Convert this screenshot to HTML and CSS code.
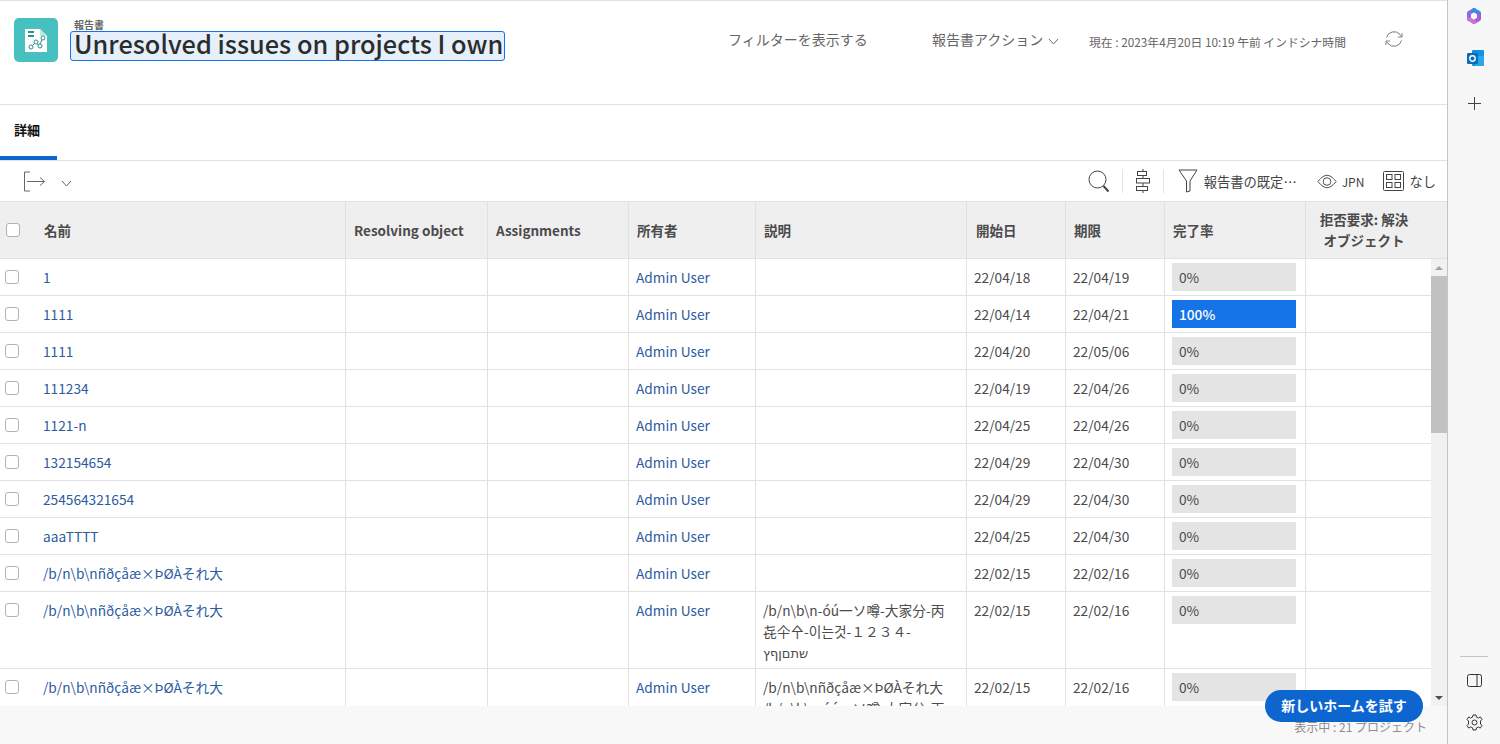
FILE: index.html

```html
<!DOCTYPE html>
<html lang="ja">
<head>
  <meta charset="UTF-8">
  <title>Unresolved issues on projects I own</title>
  <link rel="stylesheet" href="styles.css">
</head>
<body>
  <div class="app">
    <main class="main">
      <header class="top">
        <div class="logo">
          <svg width="22" height="23" viewBox="0 0 22 23">
            <path d="M0 0H15L22 7V23H0Z" fill="#fff"/>
            <path d="M15 0L22 7H15Z" fill="#bfe9e6"/>
            <path d="M3 3H9M3 7H9" stroke="#2f8f8c" stroke-width="2"/>
            <path d="M6 18L11 13L14 17L18 9" fill="none" stroke="#2f8f8c"/>
            <g fill="#fff" stroke="#2f8f8c">
              <circle cx="6" cy="18" r="2"/><circle cx="11" cy="13" r="2"/><circle cx="15" cy="17" r="2"/><circle cx="18" cy="9" r="2"/>
            </g>
          </svg>
        </div>
        <div class="heading">
          <div class="kind">報告書</div>
          <h1 class="title">Unresolved issues on projects I own</h1>
        </div>
        <div class="top-actions">
          <span class="show-filter">フィルターを表示する</span>
          <span class="report-actions">報告書アクション
            <svg class="caret" width="11" height="7" viewBox="0 0 11 7"><path d="M1 1L5.500 6L10 1" fill="none" stroke="#666"/></svg>
          </span>
          <span class="now">現在 : 2023年4月20日 10:19 午前 インドシナ時間</span>
          <svg class="refresh" width="20" height="20" viewBox="0 0 20 20" fill="none" stroke="#777">
            <path d="M2.500 8.500A7.800 7.800 0 0 1 16 5.500L17.500 7.500"/>
            <path d="M17.500 11.500A7.800 7.800 0 0 1 4 14.500L2.500 12.500"/>
            <path d="M18 4V8H14M2 16V12H6" stroke-width=".9"/>
          </svg>
        </div>
      </header>

      <nav class="tabs"><span class="tab">詳細</span></nav>

      <div class="toolbar">
        <svg class="export" width="23" height="21" viewBox="0 0 23 21" fill="none" stroke="#666">
          <path d="M7 1H1.500V20H7M4 10.500H21M17 6.500L21.500 10.500L17 14.500"/>
        </svg>
        <svg class="export-caret" width="11" height="7" viewBox="0 0 11 7"><path d="M1 1L5.500 6L10 1" fill="none" stroke="#666"/></svg>
        <div class="tools">
          <svg width="22" height="23" viewBox="0 0 22 23" fill="none" stroke="#444"><circle cx="9.500" cy="9.500" r="8.500"/><path d="M15.500 16L20.500 21.500" stroke-width="2"/></svg>
          <i class="sep"></i>
          <svg width="16" height="24" viewBox="0 0 16 24" fill="none" stroke="#444"><path d="M8 0V24"/><rect x="2.500" y="2.500" width="9" height="4" fill="#fff"/><rect x="1.500" y="9.500" width="13" height="4.500" fill="#fff"/><rect x="1.500" y="17.500" width="11" height="4" fill="#fff"/></svg>
          <i class="sep"></i>
          <span class="tool">
            <svg width="20" height="24" viewBox="0 0 20 24" fill="none" stroke="#444"><path d="M1 1H19L12 12V22L8.500 23V12Z"/></svg>
            報告書の既定…
          </span>
          <span class="tool tool-lang">
            <svg width="20" height="15" viewBox="0 0 21 15" fill="none" stroke="#444"><path d="M1 7.500C5 2.500 8 1 10.500 1S16 2.500 20 7.500C16 12.500 13 14 10.500 14S5 12.500 1 7.500Z"/><circle cx="10.500" cy="7.500" r="4"/></svg>
            JPN
          </span>
          <span class="tool tool-group">
            <svg width="21" height="20" viewBox="0 0 21 20" fill="none" stroke="#444"><rect x=".5" y=".5" width="20" height="19" rx="1"/><rect x="3.500" y="3.500" width="5.500" height="5"/><rect x="12" y="3.500" width="5.500" height="5"/><rect x="3.500" y="11.500" width="5.500" height="5"/><rect x="12" y="11.500" width="5.500" height="5"/></svg>
            なし
          </span>
        </div>
      </div>

      <table class="grid grid-head">
        <colgroup><col class="c-name"><col class="c-res"><col class="c-asg"><col class="c-own"><col class="c-desc"><col class="c-date"><col class="c-date"><col class="c-pct"><col></colgroup>
        <tr>
          <th class="name-cell"><span class="check"></span>名前</th>
          <th>Resolving object</th>
          <th>Assignments</th>
          <th>所有者</th>
          <th>説明</th>
          <th class="start-h">開始日</th>
          <th>期限</th>
          <th>完了率</th>
          <th class="reject">拒否要求: 解決<br>オブジェクト</th>
        </tr>
      </table>

      <div class="body-wrap">
        <div class="body-scroll">
          <table class="grid">
            <colgroup><col class="c-name"><col class="c-res"><col class="c-asg"><col class="c-own"><col class="c-desc"><col class="c-date"><col class="c-date"><col class="c-pct"><col></colgroup>
            <tr><td class="name-cell"><span class="check"></span><a>1</a></td><td></td><td></td><td><a>Admin User</a></td><td></td><td>22/04/18</td><td>22/04/19</td><td class="pct"><div class="bar">0%</div></td><td></td></tr>
            <tr><td class="name-cell"><span class="check"></span><a>1111</a></td><td></td><td></td><td><a>Admin User</a></td><td></td><td>22/04/14</td><td>22/04/21</td><td class="pct"><div class="bar full">100%</div></td><td></td></tr>
            <tr><td class="name-cell"><span class="check"></span><a>1111</a></td><td></td><td></td><td><a>Admin User</a></td><td></td><td>22/04/20</td><td>22/05/06</td><td class="pct"><div class="bar">0%</div></td><td></td></tr>
            <tr><td class="name-cell"><span class="check"></span><a>111234</a></td><td></td><td></td><td><a>Admin User</a></td><td></td><td>22/04/19</td><td>22/04/26</td><td class="pct"><div class="bar">0%</div></td><td></td></tr>
            <tr><td class="name-cell"><span class="check"></span><a>1121-n</a></td><td></td><td></td><td><a>Admin User</a></td><td></td><td>22/04/25</td><td>22/04/26</td><td class="pct"><div class="bar">0%</div></td><td></td></tr>
            <tr><td class="name-cell"><span class="check"></span><a>132154654</a></td><td></td><td></td><td><a>Admin User</a></td><td></td><td>22/04/29</td><td>22/04/30</td><td class="pct"><div class="bar">0%</div></td><td></td></tr>
            <tr><td class="name-cell"><span class="check"></span><a>254564321654</a></td><td></td><td></td><td><a>Admin User</a></td><td></td><td>22/04/29</td><td>22/04/30</td><td class="pct"><div class="bar">0%</div></td><td></td></tr>
            <tr><td class="name-cell"><span class="check"></span><a>aaaTTTT</a></td><td></td><td></td><td><a>Admin User</a></td><td></td><td>22/04/25</td><td>22/04/30</td><td class="pct"><div class="bar">0%</div></td><td></td></tr>
            <tr><td class="name-cell"><span class="check"></span><a>/b/n\b\nñðçåæ×ÞØÀそれ大</a></td><td></td><td></td><td><a>Admin User</a></td><td></td><td>22/02/15</td><td>22/02/16</td><td class="pct"><div class="bar">0%</div></td><td></td></tr>
            <tr><td class="name-cell"><span class="check"></span><a>/b/n\b\nñðçåæ×ÞØÀそれ大</a></td><td></td><td></td><td><a>Admin User</a></td><td class="desc">/b/n\b\n-óú一ソ噂-大家分-丙<br>㐂仐㐃-이는것-１２３４-<br><span class="hebrew">שתםןףץ</span></td><td>22/02/15</td><td>22/02/16</td><td class="pct"><div class="bar">0%</div></td><td></td></tr>
            <tr><td class="name-cell"><span class="check"></span><a>/b/n\b\nñðçåæ×ÞØÀそれ大</a></td><td></td><td></td><td><a>Admin User</a></td><td class="desc">/b/n\b\nñðçåæ×ÞØÀそれ大<br>/b/n\b\n-óú一ソ噂-大家分-丙</td><td>22/02/15</td><td>22/02/16</td><td class="pct"><div class="bar">0%</div></td><td></td></tr>
          </table>
        </div>
        <div class="scrollbar">
          <span class="arrow up"></span>
          <div class="track"><div class="thumb"></div></div>
          <span class="arrow down"></span>
        </div>
      </div>

      <footer class="foot">表示中 : 21 プロジェクト</footer>
      <button class="try-home">新しいホームを試す</button>
    </main>

    <aside class="side">
      <div class="side-top">
        <svg class="m365" width="16" height="18" viewBox="0 0 16 18" fill="none" stroke-width="4" stroke-linecap="round" stroke-linejoin="round">
          <path d="M3 12V6L8 3" stroke="#7f6fe0"/>
          <path d="M8 3L13 6V8" stroke="#2f8fe8"/>
          <path d="M13 8V12L8 15" stroke="#a55fd0"/>
          <path d="M8 15L3 12" stroke="#c774d2"/>
        </svg>
        <svg class="outlook" width="17" height="17" viewBox="0 0 17 17">
          <rect x="5" y="0" width="12" height="16" rx="1" fill="#1490df"/>
          <path d="M8 6H17V16H8Z" fill="#28a8ea"/>
          <rect x="0" y="3" width="11" height="11" rx="1" fill="#0a6cbd"/>
          <circle cx="5.500" cy="8.500" r="2.700" fill="none" stroke="#fff" stroke-width="1.400"/>
        </svg>
        <svg class="plus" width="13" height="13" viewBox="0 0 13 13"><path d="M6.500 0V13M0 6.500H13" stroke="#444"/></svg>
      </div>
      <div class="side-bottom">
        <i class="side-rule"></i>
        <svg class="panel" width="15" height="13" viewBox="0 0 15 13" fill="none" stroke="#333"><rect x=".5" y=".5" width="14" height="12" rx="2"/><path d="M10 .5V12.500"/></svg>
        <svg class="gear" width="17" height="17" viewBox="0 0 17 17" fill="none" stroke="#333"><path d="M7 1H10L10.500 3.200L12.400 4L14.300 2.900L16 5.500L14.500 7L14.500 10L16 11.500L14.300 14.100L12.400 13L10.500 13.800L10 16H7L6.500 13.800L4.600 13L2.700 14.100L1 11.500L2.500 10V7L1 5.500L2.700 2.900L4.600 4L6.500 3.200Z"/><circle cx="8.500" cy="8.500" r="2.500"/></svg>
      </div>
    </aside>
  </div>
</body>
</html>
```

FILE: styles.css

```css
* {
  box-sizing: border-box;
}
html, body {
  margin: 0;
  height: 100%;
  overflow: hidden;
}
body {
  font-family: "Noto Sans CJK JP", "Noto Sans", sans-serif;
  font-size: 14px;
  color: #4b4b4b;
  background: #fff;
}
.app {
  display: flex;
  height: 744px;
}
.main {
  position: relative;
  width: 1448px;
  display: flex;
  flex-direction: column;
  border-right: 1px solid #c4c4c4;
}

/* header */
.top {
  height: 105px;
  flex: none;
  display: flex;
  align-items: flex-start;
  padding: 17px 0 0 14px;
  border-top: 1px solid #e1e1e1;
  border-bottom: 1px solid #e1e1e1;
}
.logo {
  width: 44px;
  height: 44px;
  background: #47c1bf;
  border-radius: 5px;
  display: flex;
  align-items: center;
  justify-content: center;
}
.heading {
  margin-left: 12px;
  margin-top: 3px;
}
.kind {
  height: 10px;
  font-size: 10px;
  line-height: 8px;
  font-weight: 700;
  color: #666;
  margin-left: 4px;
}
.title {
  margin: 0;
  width: 435px;
  height: 30px;
  line-height: 23px;
  padding: 0 3px;
  font-size: 25.300px;
  font-weight: 500;
  color: #2c2c2c;
  background: #e5f0fb;
  border: 1px solid #1473e6;
  border-radius: 3px;
  white-space: nowrap;
}
.top-actions {
  position: absolute;
  top: 27px;
  left: 728px;
  display: flex;
  align-items: center;
  color: #666;
  height: 24px;
}
.show-filter {
  width: 204px;
  font-size: 14px;
}
.report-actions {
  width: 157px;
  font-size: 14px;
}
.caret {
  margin-left: 2px;
}
.now {
  width: 295px;
  font-size: 11.800px;
  padding-top: 4px;
}

/* tabs */
.tabs {
  height: 56px;
  flex: none;
  border-bottom: 1px solid #e1e1e1;
}
.tab {
  display: block;
  width: 57px;
  height: 55px;
  padding: 15px 0 0 14px;
  font-size: 13px;
  font-weight: 700;
  color: #111;
  border-bottom: 4px solid #0d66d0;
}

/* toolbar */
.toolbar {
  height: 40px;
  flex: none;
  display: flex;
  align-items: center;
  padding: 0 11px 0 23px;
}
.export-caret {
  margin-left: 15px;
  margin-top: 4px;
}
.tools {
  margin-left: auto;
  display: flex;
  align-items: center;
  gap: 12px;
  font-size: 13.300px;
  color: #444;
}
.sep {
  width: 1px;
  height: 24px;
  background: #e4e4e4;
}
.tool {
  display: flex;
  align-items: center;
  gap: 6px;
  margin-left: 2px;
  margin-right: 6px;
}
.tool-lang {
  gap: 5px;
  font-size: 12px;
}
.tool-group {
  gap: 5px;
  margin-left: 1px;
  margin-right: 0;
}

/* table */
.grid {
  width: 100%;
  table-layout: fixed;
  border-collapse: separate;
  border-spacing: 0;
}
.c-name { width: 346px; }
.c-res { width: 142px; }
.c-asg { width: 141px; }
.c-own { width: 127px; }
.c-desc { width: 211px; }
.c-date { width: 99px; }
.c-pct { width: 141px; }
.grid-head {
  flex: none;
}
.grid th {
  height: 58px;
  background: #efefef;
  text-align: left;
  font-size: 13.500px;
  font-weight: 700;
  color: #4b4b4b;
  padding: 0 8px;
  border-top: 1px solid #e1e1e1;
  border-right: 1px solid #e1e1e1;
  border-bottom: 1px solid #e1e1e1;
}
.grid th:last-child {
  border-right: 0;
  text-align: center;
  line-height: 21px;
  padding: 0 25px 0 0;
}
.grid .start-h {
  padding-left: 9px;
}
.grid .name-cell {
  position: relative;
  padding-left: 43px;
}
.grid th.name-cell {
  padding-left: 44px;
}
.check {
  position: absolute;
  left: 5px;
  top: 11px;
  width: 14px;
  height: 14px;
  background: #fff;
  border: 1px solid #b3b3b3;
  border-radius: 3px;
}
th .check {
  left: 6px;
  top: 21px;
}
.grid td {
  height: 37px;
  padding: 8px 8px 0 7px;
  vertical-align: top;
  font-size: 13.700px;
  line-height: 21px;
  border-right: 1px solid #e1e1e1;
  border-bottom: 1px solid #e1e1e1;
}
.grid td:last-child {
  border-right: 0;
}
.grid a {
  color: #2c5b9f;
}
.grid .desc {
  padding-bottom: 4px;
}
.hebrew {
  font-family: "DejaVu Sans", sans-serif;
  font-size: 13px;
}
.grid .pct {
  padding: 4px 9px 0 7px;
}
.bar {
  height: 28px;
  line-height: 28px;
  padding-left: 7px;
  background: #e4e4e4;
}
.bar.full {
  background: #1473e6;
  color: #fff;
  font-weight: 500;
}
.body-wrap {
  flex: 1;
  min-height: 0;
  display: flex;
  overflow: hidden;
}
.body-scroll {
  flex: 1;
  min-width: 0;
  overflow: hidden;
}
.scrollbar {
  width: 16px;
  flex: none;
  display: flex;
  flex-direction: column;
  background: #f1f1f1;
}
.arrow {
  height: 17px;
  flex: none;
  display: flex;
  align-items: center;
  justify-content: center;
}
.arrow::before {
  content: "";
  border-left: 4px solid transparent;
  border-right: 4px solid transparent;
}
.arrow.up::before {
  border-bottom: 4px solid #a3a3a3;
}
.arrow.down::before {
  border-top: 4px solid #505050;
}
.track {
  flex: 1;
}
.thumb {
  height: 157px;
  background: #c1c1c1;
}

/* footer */
.foot {
  height: 38px;
  flex: none;
  background: #f8f8f8;
  text-align: right;
  padding: 12px 20px 0 0;
  font-size: 12px;
  color: #8e8e8e;
}
.try-home {
  position: absolute;
  left: 1265px;
  top: 690px;
  width: 158px;
  height: 32px;
  padding: 0 0 2px;
  border: 0;
  border-radius: 16px;
  background: #0d66d0;
  color: #fff;
  font-family: inherit;
  font-size: 14px;
  font-weight: 700;
}

/* right rail */
.side {
  flex: 1;
  display: flex;
  flex-direction: column;
  align-items: center;
  justify-content: space-between;
  background: #f7f7f7;
}
.side-top {
  display: flex;
  flex-direction: column;
  align-items: center;
  padding-top: 7px;
}
.side svg {
  display: block;
}
.outlook {
  margin-top: 25px;
  margin-left: 2px;
}
.plus {
  margin-top: 30px;
}
.side-bottom {
  display: flex;
  flex-direction: column;
  align-items: center;
  padding-bottom: 13px;
}
.side-rule {
  width: 28px;
  height: 1px;
  background: #c4c4c4;
}
.panel {
  margin-top: 17px;
}
.gear {
  margin-top: 27px;
}
```
